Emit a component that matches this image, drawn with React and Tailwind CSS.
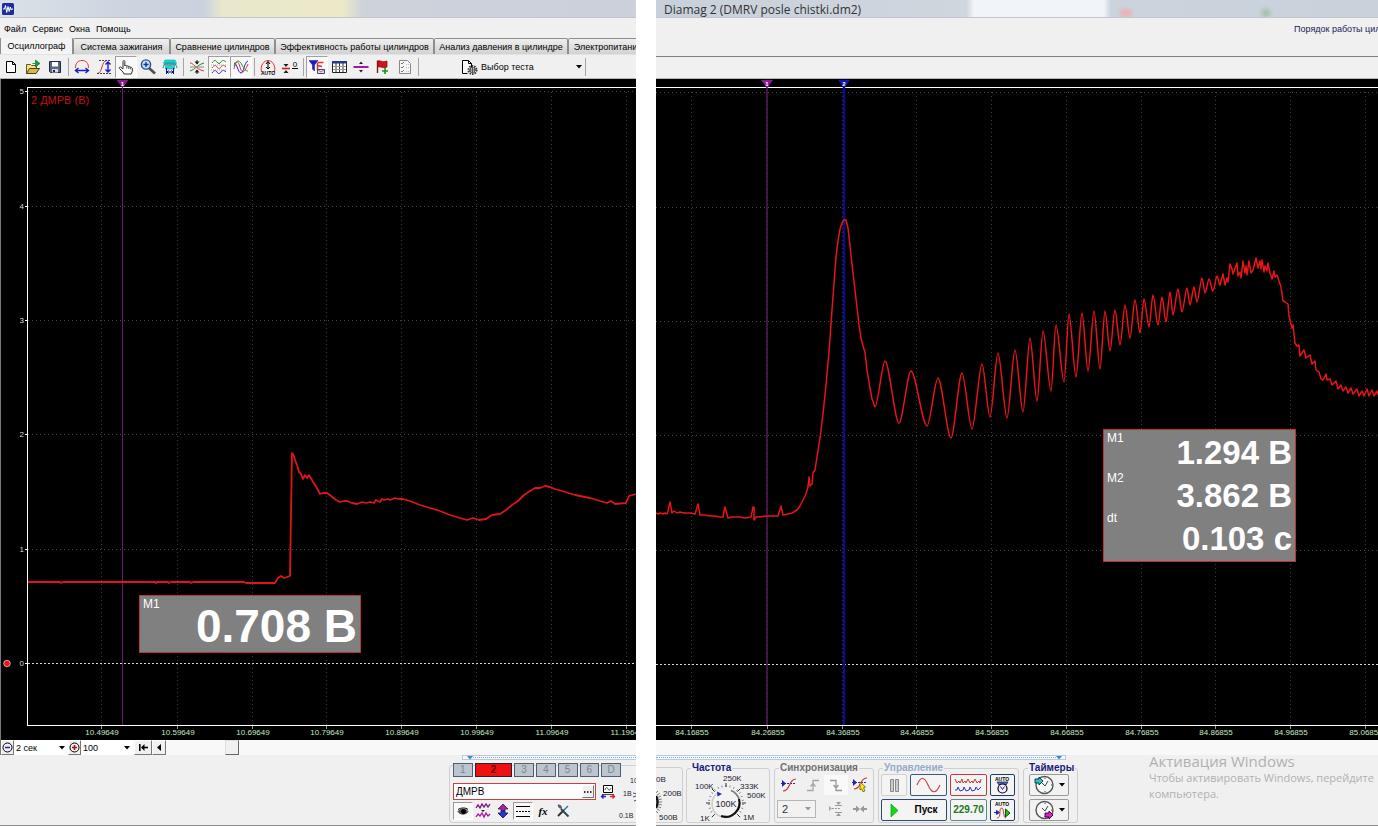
import React from "react";

/* ---------- shared data ---------- */

const TABS = [
  { label: "Осциллограф", cls: "w-[73px]", active: true },
  { label: "Система зажигания", cls: "w-[97px]" },
  { label: "Сравнение цилиндров", cls: "w-[105px]" },
  { label: "Эффективность работы цилиндров", cls: "w-[159px]" },
  { label: "Анализ давления в цилиндре", cls: "w-[134px]" },
  { label: "Электропитание", cls: "w-[80px]" },
];

const LEFT_TRACE =
  "28,582 60,582 61,583 63,582 155,582 156,583 157,582 168,582 169,583 171,582 190,582 191,583 193,582 244,582 246,583 275,583 278,578 281,576 284,578 287,577 290,576 292,453 294,456 295,460 297,465 299,472 301,474 303,479 305,475 307,478 309,475 312,480 315,485 318,490 320,494 323,493 327,493 331,496 336,500 340,502 344,501 347,501 352,503 357,504 362,502 366,503 370,502 374,503 376,500 380,502 382,499 384,500 388,499 390,500 395,498 399,499 403,499 410,501 420,505 430,508 440,511 450,515 460,518 467,520 473,518 479,520 486,519 492,515 500,514 506,510 512,505 518,501 524,495 530,491 535,488 540,488 545,486 550,487 555,489 562,491 575,495 590,498 600,501 607,503 611,501 615,504 626,503 629,496 636,494";

const RIGHT_START =
  "656,513 658,514 660,513 663,514 665,513 667,514 668,511 670,502 672,513 674,511 677,513 680,512 684,513 690,513 695,514 698,504 700,515 705,515 710,516 715,516 720,517 723,517 725,507 728,518 732,517 740,517 745,518 751,517 753,507 754,507 754,520 756,517 770,516 778,516 781,506 783,515 788,514 792,513 797,510 800,506 803,500 806,494 808,487 809,477 810,486 812,484 813,473 815,470 817,457 820,438 823,414 826,385 829,352 832,310 835,270 836,257 838,241 840,229 842,223 844,220 846,220 848,228 851,255 855,290 859,325 861,338 863,346 865,352 867,370 870,388 872,399";

/* turning points of the oscillating part */
const RIGHT_WAVES =
  "875,407 885,361 899,423 911,371 927,426 938,378 951,438 962,373 972,429 982,364 990,417 998,353 1007,418 1015,350 1023,412 1030,338 1037,401 1043,331 1051,391 1056,325 1064,382 1069,314 1076,377 1082,313 1088,371 1094,311 1100,369 1105,311 1110,351 1115,310 1120,345 1125,305 1130,338 1135,300 1140,333 1144,299 1149,327 1153,295 1158,325 1162,297 1166,322 1170,292 1173,315 1178,289 1182,312 1187,288 1190,305 1194,287 1197,302 1202,278 1205,293 1209,279 1213,291 1217,276 1220,285";

const RIGHT_END =
  "1223,274 1225,285 1227,278 1228,282 1230,264 1232,269 1233,274 1237,263 1238,276 1240,272 1241,278 1243,261 1245,273 1246,266 1247,275 1249,261 1251,273 1253,270 1256,258 1258,268 1260,261 1261,269 1262,260 1264,272 1265,266 1267,271 1268,263 1270,273 1272,279 1274,271 1275,277 1277,275 1279,281 1281,287 1283,301 1285,302 1288,304 1289,316 1291,324 1292,328 1293,325 1295,343 1297,346 1299,345 1300,356 1304,350 1306,358 1310,355 1312,364 1315,361 1316,370 1319,372 1321,379 1323,380 1326,374 1327,380 1330,379 1332,385 1336,381 1338,389 1341,385 1343,391 1346,387 1348,393 1351,388 1353,394 1357,389 1359,396 1362,391 1364,396 1367,389 1369,396 1372,390 1374,396 1377,391 1378,395";

function curvedPath(straight, waves, tail) {
  const toPoints = (s) => s.split(" ").map((p) => p.split(",").map(Number));
  let [px, py] = toPoints(straight).at(-1);
  let d = "M" + straight.split(" ").join("L");
  for (const [x, y] of toPoints(waves)) {
    const k = (x - px) * 0.3;
    d += `C${px + k},${py} ${x - k},${y} ${x},${y}`;
    px = x;
    py = y;
  }
  return d + "L" + tail.split(" ").join("L");
}

/* ---------- small building blocks ---------- */

function Svg({ w = 16, h = 16, children, className = "" }) {
  return (
    <svg
      width={w}
      height={h}
      viewBox={`0 0 ${w} ${h}`}
      fill="none"
      stroke="#000"
      className={"shrink-0 " + className}
      aria-hidden="true"
    >
      {children}
    </svg>
  );
}

const Sep = () => <span className="mx-[2px] h-[18px] w-px bg-[#a6a6a6]" />;

function ToolButton({ label, pressed, children }) {
  return (
    <button
      aria-label={label}
      className={
        "flex h-[22px] w-[22px] items-center justify-center " +
        (pressed ? "border border-[#a0a0a0] border-r-white border-b-white bg-[#f9f9f9]" : "")
      }
    >
      {children}
    </button>
  );
}

const Caret = ({ className = "" }) => (
  <svg width="6" height="4" viewBox="0 0 6 4" className={"shrink-0 " + className} aria-hidden="true">
    <path d="M0 0h6L3 3.5z" fill="currentColor" />
  </svg>
);

function Marker({ x, n, color, head, line }) {
  return (
    <g>
      <path d={`M${x} 84V725`} stroke={color} strokeWidth={line} />
      <path d={`M${x - 6} 80h12l-6 8z`} fill={head} />
      <text x={x} y="86" fontSize="6" fontWeight="bold" fill="#fff" textAnchor="middle">
        {n}
      </text>
    </g>
  );
}

function Grid({ x0, x1, xs, ys, zero }) {
  return (
    <g shapeRendering="crispEdges">
      {xs.map((x) => (
        <path key={x} d={`M${x + 0.5} 92V725`} stroke="#3c3c3c" strokeDasharray="1 3" />
      ))}
      {ys.map((y) => (
        <path key={y} d={`M${x0} ${y + 0.5}H${x1}`} stroke="#474747" strokeDasharray="1 3" />
      ))}
      <path d={`M${x0} ${zero + 0.5}H${x1}`} stroke="#d8d8d8" strokeDasharray="2 2" />
      <path d={`M${x0} 87.5H${x1}M${x0} 725.5H${x1}`} stroke="#fff" />
      {xs.map((x) => (
        <path key={x} d={`M${x + 0.5} 726v3`} stroke="#9a9a9a" />
      ))}
    </g>
  );
}

function XLabels({ xs, labels }) {
  return (
    <g fill="#c4e8c4" fontSize="8" textAnchor="middle">
      {xs.map((x, i) => (
        <text key={x} x={x + 1} y="735">
          {labels[i]}
        </text>
      ))}
    </g>
  );
}

/* ---------- toolbar ---------- */

function Toolbar() {
  return (
    <div className="flex h-6 items-center overflow-hidden border-b border-[#b5b5b5] bg-[#f0f0f0]">
      <ToolButton label="Новый">
        <Svg>
          <path d="M3.5 2.5h6l3 3v8h-9z" fill="#fff" />
          <path d="M9.500 2.500v3h3" />
        </Svg>
      </ToolButton>
      <ToolButton label="Открыть">
        <Svg>
          <path d="M1.500 14.500v-9h4l1 1h5v3" fill="#f4e28a" stroke="#6b5a10" />
          <path d="M1.500 14.500l3-5h10l-3.500 5z" fill="#d9b84a" stroke="#4d420d" />
          <path d="M10.500 1l4.500 3.500-4.500 3.500z" fill="#1d9a3c" stroke="#0c6b23" strokeWidth=".6" />
          <path d="M7.500 4.500h3" stroke="#1d9a3c" />
        </Svg>
      </ToolButton>
      <ToolButton label="Сохранить">
        <Svg>
          <path d="M2.500 2.500h11v11h-10l-1-1z" fill="#5b6784" stroke="#1f2740" />
          <path d="M5 3h6v4.500H5z" fill="#fff" stroke="none" />
          <path d="M5 10h6v3.500H5z" fill="#d7dbe4" stroke="none" />
          <path d="M6 11h2v2H6z" fill="#1f2740" stroke="none" />
        </Svg>
      </ToolButton>
      <Sep />
      <ToolButton label="Растянуть по времени">
        <Svg>
          <path d="M1.500 9C1.500 4 4 1.500 8 1.500S14.500 4 14.500 9" stroke="#d33" />
          <path d="M1 11.500h14M4.500 9l-3 2.500 3 2.500M11.500 9l3 2.500-3 2.500" stroke="#1a1ad0" strokeWidth="1.400" />
        </Svg>
      </ToolButton>
      <ToolButton label="Растянуть по амплитуде">
        <Svg>
          <path d="M1 14.500c6 0 4-13 10-13" stroke="#d33" />
          <path d="M3 1.500h12M1 14.500h14" stroke="#444" strokeDasharray="2 1" />
          <path d="M12 3v10M9.500 5.500L12 3l2.500 2.500M9.500 10.500L12 13l2.500-2.500" stroke="#1a1ad0" strokeWidth="1.400" />
        </Svg>
      </ToolButton>
      <ToolButton label="Рука" pressed>
        <Svg>
          <path
            d="M6 15l-1-2-3.500-3.500c-.8-1 .4-2 1.500-1.200L5 10V2.500c0-1.300 1.800-1.300 1.800 0V7c.4-.9 2-.8 2 .3.500-.7 2-.6 2 .5.600-.5 1.900-.3 1.900.8.800-.3 1.700.1 1.700 1v2.400l-1.200 3z"
            fill="#fff"
            stroke="#333"
          />
          <path d="M8.800 7.500v2M10.800 8v2M12.700 8.600v1.800" stroke="#444" />
        </Svg>
      </ToolButton>
      <ToolButton label="Лупа">
        <Svg>
          <path d="M9 9l6 5.500" stroke="#4d4d55" strokeWidth="2.600" />
          <circle cx="6" cy="5.500" r="4.600" fill="#bfe3ff" stroke="#2a4b86" strokeWidth="1.400" />
          <path d="M3.500 5.500h5M6 3v5" stroke="#173a8a" strokeWidth="1.400" />
        </Svg>
      </ToolButton>
      <ToolButton label="Участок">
        <Svg>
          <path d="M3 1h10l1.500 3-2 3v3h-9V7l-2-3z" fill="#19d6d6" stroke="#0aa" strokeWidth=".6" />
          <path d="M1 9c1-5 3-5 4-5h6c2 0 3 1 4 5" stroke="#0a8a8a" />
          <path d="M3 6c2-2 3 1 5 0s3-1 5 0" stroke="#d55" />
          <path d="M4.500 9v6M11.500 9v6M5 13h6" stroke="#116" />
          <path d="M6.500 11.500L5 13l1.500 1.500M9.500 11.500L11 13l-1.500 1.500" stroke="#118" />
        </Svg>
      </ToolButton>
      <Sep />
      <ToolButton label="Совместить">
        <Svg>
          <path d="M1 4c4 0 5 6 14 8" stroke="#d33" />
          <path d="M1 12c5-1 8-7 14-8" stroke="#2a8a2a" />
          <path d="M1 8h14" stroke="#888" />
          <path d="M8 1v4M8 15v-4" stroke="#222" />
          <path d="M5.500 2.500h5L8 5.500zM5.500 13.500h5L8 10.500z" fill="#222" stroke="none" />
        </Svg>
      </ToolButton>
      <ToolButton label="Разнести" pressed>
        <Svg>
          <path d="M1 4c2-3 4-3 5-1s3 2 4 0 3-2 5 0" stroke="#2a8a2a" />
          <path d="M1 9c2-3 4-3 5-1s3 2 4 0 3-2 5 0" stroke="#d33" />
          <path d="M1 14c2-3 4-3 5-1s3 2 4 0 3-2 5 0" stroke="#22c" />
          <path d="M0 6h16M0 11h16" stroke="#aaa" strokeDasharray="1 1" />
        </Svg>
      </ToolButton>
      <ToolButton label="Наложить" pressed>
        <Svg>
          <path d="M1 10C3 1 5 1 7 8s4 7 8-3" stroke="#d33" />
          <path d="M1 4c3 0 4 10 7 10s3-11 7-12" stroke="#22c" />
          <path d="M1 7c3-8 6-5 8-1s4 6 6 6" stroke="#2a8a2a" />
        </Svg>
      </ToolButton>
      <Sep />
      <ToolButton label="Авто амплитуда">
        <Svg>
          <path d="M1.500 13C0 6 4 1.500 8 1.500S16 6 14.500 13" stroke="#d33" />
          <path d="M8 2.500v7M6 5l2-2.500L10 5M6 8l2 2 2-2" />
          <text x="8" y="16" fontSize="5" fontWeight="bold" textAnchor="middle" fill="#000" stroke="none">
            AUTO
          </text>
        </Svg>
      </ToolButton>
      <ToolButton label="Установить ноль">
        <Svg>
          <path d="M0 9.500h8" stroke="#c22" strokeWidth="1.600" />
          <path d="M1.500 5h5L4 8zM1.500 14h5L4 11z" fill="#222" stroke="none" />
          <path d="M10 9.500h6" />
          <text x="13" y="8" fontSize="8" textAnchor="middle" fill="#000" stroke="none">
            0
          </text>
        </Svg>
      </ToolButton>
      <Sep />
      <ToolButton label="Фильтр" pressed>
        <Svg>
          <path d="M0 1.500h9L5.500 6v6L3.500 10V6z" fill="#1a1ad0" stroke="#118" strokeWidth=".5" />
          <path d="M8.500 3.500h6M8 6.500l5 1M8.500 4v7" stroke="#d33" strokeWidth="1.600" />
          <path d="M8.500 10.500h7v4h-7z" fill="#dfe6ff" stroke="#446" />
          <path d="M9 11l3 2 3-2" stroke="#c44" strokeWidth=".8" />
        </Svg>
      </ToolButton>
      <ToolButton label="Таблица">
        <Svg>
          <path d="M1.500 2.500h14v11h-14z" fill="#fff" stroke="#222" />
          <path d="M1 2h15v2.500H1z" fill="#223a8a" stroke="none" />
          <path d="M5 4v9M8.500 4v9M12 4v9" stroke="#333" />
          <path d="M2 7.500h13M2 10.500h13" stroke="#999" />
        </Svg>
      </ToolButton>
      <ToolButton label="Линейка">
        <Svg>
          <path d="M.5 8h15" stroke="#909" strokeWidth="1.800" />
          <path d="M6 5h4L8 2.500zM6 11h4L8 13.500z" fill="#222" stroke="none" />
        </Svg>
      </ToolButton>
      <ToolButton label="Флаг">
        <Svg>
          <path d="M2.500 1.500V14" stroke="#722" strokeWidth="1.400" />
          <path d="M3 2c3-1 4 2 9 0v6c-4 2-6-1-9 0z" fill="#d4121c" stroke="#800" strokeWidth=".7" />
          <path d="M7 12h6M10 9v6" stroke="#169a16" strokeWidth="1.600" />
        </Svg>
      </ToolButton>
      <ToolButton label="Отчёт">
        <Svg>
          <path d="M2.500 1.500h8l3 3v10h-11z" fill="#f6f6f6" stroke="#888" />
          <path d="M4 4l1 1 2-2M4 8l1 1 2-2M4 12l1 1 2-2" stroke="#777" />
          <path d="M9 5.500h3M9 8.500h3M9 12.500h3" stroke="#bbb" strokeDasharray="1 1" />
        </Svg>
      </ToolButton>
      <Sep />
      <button className="ml-10 flex h-[22px] w-[121px] shrink-0 items-center gap-[3px]">
        <Svg w={17}>
          <path d="M1.500 14.500v-13h6l3 3v4" fill="#fff" />
          <path d="M7.500 1.500v3h3M1.500 14.500h5" />
          <circle cx="11.500" cy="11" r="4" stroke="#333" strokeWidth="2" strokeDasharray="1.500 1" />
          <circle cx="11.500" cy="11" r="2.500" stroke="#444" />
          <path d="M8 11h7M11.500 7.500v7" stroke="#555" />
        </Svg>
        <span className="flex-1 text-left">Выбор теста</span>
        <Caret />
      </button>
      <span className="ml-[3px] h-[18px] w-px bg-[#a6a6a6]" />
    </div>
  );
}

/* ---------- oscilloscope screens ---------- */

const LX = [101, 177, 252, 326, 401, 476, 551, 626];
const RX = [691, 767, 842, 916, 991, 1066, 1141, 1215, 1290, 1365];

function LeftScope() {
  return (
    <div className="relative bg-black">
      <svg viewBox="0 79 636 661" className="block w-full" role="img" aria-label="ДМРВ, канал 2">
        <path d="M.5 79V740" stroke="#777" />
        <Grid x0={28} x1={636} xs={LX} ys={[91, 206, 320, 434, 549]} zero={663} />
        <path d="M27.500 87V726" stroke="#fff" />
        <g fill="#ddd" fontSize="8" textAnchor="end">
          {[5, 4, 3, 2, 1, 0].map((n, i) => (
            <text key={n} x="24" y={[94, 209, 323, 437, 552, 666][i]}>
              {n}
            </text>
          ))}
        </g>
        <path d="M25 91.500h3M25 206.500h3M25 320.500h3M25 434.500h3M25 549.500h3M25 663.500h3" stroke="#fff" />
        <circle cx="7" cy="663.500" r="3.300" fill="#e8141c" stroke="#fff" strokeWidth=".6" />
        <text x="31" y="104" fontSize="11" fill="#c01414">
          2 ДМРВ (В)
        </text>
        <Marker x={122.5} n="1" color="#6a1a6e" head="#8a1a8e" line={1} />
        <polyline points={LEFT_TRACE} fill="none" stroke="#e0141a" strokeWidth="1.800" strokeLinejoin="round" />
        <XLabels
          xs={LX}
          labels={["10.49649", "10.59649", "10.69649", "10.79649", "10.89649", "10.99649", "11.09649", "11.19649"]}
        />
      </svg>
      <div className="absolute top-[516px] left-[139px] flex h-[58px] w-[222px] justify-between border border-[#c43030] bg-[#808080] px-[3px] text-white">
        <span className="text-[12px] leading-4">М1</span>
        <span className="text-[46px] leading-[60px] font-bold whitespace-nowrap">0.708 В</span>
      </div>
    </div>
  );
}

const READINGS = [
  ["М1", "1.294 В"],
  ["М2", "3.862 В"],
  ["dt", "0.103 с"],
];

function RightScope() {
  return (
    <div className="relative bg-black">
      <svg viewBox="656 79 722 661" className="block w-full" role="img" aria-label="ДМРВ после чистки">
        <Grid x0={656} x1={1378} xs={RX} ys={[92, 207, 321, 435, 550]} zero={664} />
        <Marker x={767} n="1" color="#5a145e" head="#8a1a8e" line={1.500} />
        <Marker x={844} n="2" color="#0c0c86" head="#1414b4" line={2.500} />
        <path
          d={curvedPath(RIGHT_START, RIGHT_WAVES, RIGHT_END)}
          fill="none"
          stroke="#e8141a"
          strokeWidth="1.500"
          strokeLinejoin="round"
        />
        <XLabels
          xs={RX}
          labels={[
            "84.16855",
            "84.26855",
            "84.36855",
            "84.46855",
            "84.56855",
            "84.66855",
            "84.76855",
            "84.86855",
            "84.96855",
            "85.06855",
          ]}
        />
      </svg>
      <div className="absolute top-[350px] left-[447px] flex h-[133px] w-[193px] justify-between border border-[#c43030] bg-[#808080] px-[3px] text-white">
        <div className="flex flex-col">
          {READINGS.map(([k]) => (
            <span key={k} className="h-10 text-[12px] leading-4">
              {k}
            </span>
          ))}
        </div>
        <div className="flex flex-col items-end">
          {READINGS.map(([k, v]) => (
            <span key={k} className="h-[43px] text-[33px] leading-[45px] font-bold whitespace-nowrap">
              {v}
            </span>
          ))}
        </div>
      </div>
    </div>
  );
}

/* ---------- time base row ---------- */

function SmallSelect({ label, value, className }) {
  return (
    <span className={"relative flex h-full items-center " + className}>
      <select aria-label={label} className="h-full w-full appearance-none bg-white pl-[2px] text-[9px] leading-3 outline-none">
        <option>{value}</option>
      </select>
      <Caret className="pointer-events-none absolute right-[3px]" />
    </span>
  );
}

function TimeRow() {
  const box = "flex h-full items-center justify-center border border-white border-r-[#777] border-b-[#777] bg-[#f0f0f0]";
  return (
    <div className="flex h-[15px] items-center border-l border-[#777] bg-[#f8f8f8]">
      <button aria-label="Сжать" className={box + " w-[13px]"}>
        <Svg w={11} h={11}>
          <circle cx="5.500" cy="5.500" r="4.500" />
          <path d="M3 5.500h5" stroke="#22a" strokeWidth="1.500" />
        </Svg>
      </button>
      <SmallSelect label="Развёртка" value="2 сек" className="w-[54px]" />
      <button aria-label="Растянуть" className={box + " w-[13px]"}>
        <Svg w={11} h={11}>
          <circle cx="5.500" cy="5.500" r="4.500" />
          <path d="M3 5.500h5M5.500 3v5" stroke="#a11" strokeWidth="1.500" />
        </Svg>
      </button>
      <SmallSelect label="Масштаб" value="100" className="w-[52px]" />
      <button aria-label="В начало" className={box + " ml-px w-[18px]"}>
        <Svg w={9} h={7}>
          <path d="M.8 0v7" strokeWidth="1.600" />
          <path d="M5.500 0v7L2 3.500z" fill="#000" stroke="none" />
          <path d="M5 3.500h4" strokeWidth="1.600" />
        </Svg>
      </button>
      <button aria-label="Назад" className={box + " w-[14px]"}>
        <Svg w={4} h={7}>
          <path d="M4 0v7L0 3.500z" fill="#000" stroke="none" />
        </Svg>
      </button>
      <input
        type="range"
        aria-label="Прокрутка"
        defaultValue="13"
        className="m-0 h-full min-w-0 flex-1 appearance-none bg-transparent [&::-webkit-slider-thumb]:h-[15px] [&::-webkit-slider-thumb]:w-[14px] [&::-webkit-slider-thumb]:appearance-none [&::-webkit-slider-thumb]:border [&::-webkit-slider-thumb]:border-[#ddd] [&::-webkit-slider-thumb]:border-r-[#666] [&::-webkit-slider-thumb]:border-b-[#666] [&::-webkit-slider-thumb]:bg-[#f0f0f0]"
      />
    </div>
  );
}

/* ---------- left bottom panel ---------- */

function ChannelPanel() {
  return (
    <div className="flex h-[71px] justify-end overflow-hidden border-b border-[#8c8c8c] bg-[#f0f0f0]">
      <div className="flex w-[187px] flex-col">
        <div className="ml-[13px] flex h-[5px] items-center border border-[#b9c9d9] border-r-0 bg-[#f6faff]">
          <span className="ml-1 text-[#3a8ac8]">
            <Caret />
          </span>
          <span className="flex-1 border-t border-dotted border-[#7aa6d0]" />
        </div>
        <div className="mt-[5px] flex h-[58px] rounded-l border border-r-0 border-[#d0d0d0] pl-[3px]">
          <div className="-mt-[3px] w-[168px] shrink-0">
            <div className="flex h-[14px] gap-[2px]">
              {["1", "2", "3", "4", "5", "6", "D"].map((n) => (
                <button
                  key={n}
                  className={
                    "h-full border text-[10px] leading-3 " +
                    (n === "2"
                      ? "w-[38px] border-[#223] bg-[#f01010] font-bold text-[#600]"
                      : "w-5 border-[#4d5f73] bg-[#bcc4cd] text-[#7b8794]")
                  }
                >
                  {n}
                </button>
              ))}
            </div>
            <div className="mt-[6px] flex h-[17px] items-center gap-1">
              <div className="flex h-full w-[143px] border border-[#c84040] bg-white">
                <input aria-label="Имя канала" defaultValue="ДМРВ" className="min-w-0 flex-1 bg-white pl-[2px] text-[10px] outline-none" />
                <button aria-label="Выбрать" className="m-px flex w-3 items-center justify-center border border-white border-r-[#777] border-b-[#777] bg-[#f0f0f0]">
                  <Svg w={8} h={2}>
                    <path d="M0 1h8" strokeWidth="1.500" strokeDasharray="1.500 1.500" />
                  </Svg>
                </button>
              </div>
              <button aria-label="Переключить датчик">
                <Svg h={15}>
                  <path d="M3.500 1.500h9v7h-9z" fill="#fff" />
                  <path d="M5 6c1-3 2-3 3-1s2 1 3-1M2 10.500h12" stroke="#444" />
                  <path d="M6 12.500H2M3.500 10.500l-2 2 2 2" stroke="#22c" strokeWidth="1.300" />
                  <path d="M10 12.500h4M12.500 10.500l2 2-2 2" stroke="#d22" strokeWidth="1.300" />
                </Svg>
              </button>
            </div>
            <div className="mt-[1px] flex h-5 items-center">
              <ChannelTool label="Показать" pressed>
                <path d="M3 8.500c2-3 8-3 10 0-2 3.500-8 3.500-10 0z" fill="#555" stroke="#444" />
                <circle cx="8.500" cy="8.500" r="2" fill="#000" />
                <path d="M3 6.500c3-2 8-2 10 0" />
              </ChannelTool>
              <ChannelTool label="Сигнал">
                <path d="M1 5l2-3 2 3 2-4 2 3 2-3 2 3 2-3" stroke="#717" strokeWidth="1.300" />
                <path d="M1 14l2-3 2 2 2-3 2 4 2-4 2 3 2-2" stroke="#a19" strokeWidth="1.300" />
                <path d="M6 7h4L8 9z" fill="#222" stroke="none" />
              </ChannelTool>
              <ChannelTool label="Сдвиг">
                <path d="M8 1l5 5h-3v2H6V6H3z" fill="#a1269c" stroke="#515" strokeWidth=".8" />
                <path d="M8 15l5-5h-3V8H6v2H3z" fill="#2038d8" stroke="#115" strokeWidth=".8" />
              </ChannelTool>
              <ChannelTool label="Уровни" pressed>
                <path d="M1 3.500h14M1 13.500h14" />
                <path d="M1 8.500h14" strokeDasharray="2 1" />
              </ChannelTool>
              <button aria-label="Функция" className="h-[18px] w-5 text-[11px] leading-4 font-bold italic font-['Liberation_Serif',serif]">
                fx
              </button>
              <ChannelTool label="Настройки">
                <path d="M3 13l6-6" stroke="#333" strokeWidth="2" />
                <path d="M13.500 13.500L6 6" stroke="#345" strokeWidth="2" />
                <path d="M3 2l1 2.500 2.500 1L6 3 4 2z" fill="#667" stroke="#556" />
                <path d="M9 7l4-4" stroke="#27a" strokeWidth="1.500" />
              </ChannelTool>
            </div>
          </div>
          <svg width="14" height="58" viewBox="0 0 14 58" className="w-[14px] shrink-0 overflow-visible" aria-hidden="true">
            <g fontSize="7" fill="#223">
              <text x="9" y="17">10B</text>
              <text x="2" y="30">1B</text>
              <text x="-2" y="52">0.1B</text>
            </g>
            <path d="M12 27l4 1M12 31l3-1M13 35l3-1" stroke="#555" />
          </svg>
        </div>
      </div>
    </div>
  );
}

function ChannelTool({ label, pressed, children }) {
  return (
    <button
      aria-label={label}
      className={
        "flex h-[18px] w-5 items-center justify-center " +
        (pressed ? "border border-[#999] border-r-white border-b-white bg-[#f9f9f9]" : "")
      }
    >
      <Svg>{children}</Svg>
    </button>
  );
}

/* ---------- right bottom panel ---------- */

function Group({ title, tone, className, children }) {
  return (
    <fieldset className={"h-[60px] shrink-0 rounded-[3px] border border-[#cfcfcf] px-[2px] pb-0 " + className}>
      <legend className={"ml-[2px] h-[10px] px-px text-[10px] leading-[10px] font-bold whitespace-nowrap " + tone}>{title}</legend>
      {children}
    </fieldset>
  );
}

function ticks(cx, cy, r0, r1, from, to, n) {
  let d = "";
  for (let i = 0; i < n; i++) {
    const a = ((from + ((to - from) * i) / (n - 1)) * Math.PI) / 180;
    d += `M${cx + r0 * Math.cos(a)} ${cy + r0 * Math.sin(a)}L${cx + r1 * Math.cos(a)} ${cy + r1 * Math.sin(a)}`;
  }
  return d;
}

function FrequencyKnob() {
  return (
    <svg width="78" height="50" viewBox="689 773 78 50" className="block" role="img" aria-label="Частота 100K">
      <path d={ticks(726, 803, 16, 18, 135, 405, 21)} stroke="#888" />
      <path d={ticks(726, 803, 16, 20, 135, 405, 7)} stroke="#333" />
      <circle cx="726" cy="803" r="13" fill="#f3f3f3" />
      <path d="M717 793.500A13.500 13.500 0 1 0 739 803" fill="none" stroke="#ccc" strokeWidth="1.500" />
      <path d="M739 799A14 14 0 0 1 721 816" fill="none" stroke="#111" strokeWidth="2.200" />
      <path d="M731 790.500A14 14 0 0 1 739 799" fill="none" stroke="#777" strokeWidth="1.600" />
      <path d="M717 791.500l5 2.500-4.500 2.500z" fill="#1428b0" />
      <g fill="#223" fontSize="8">
        <text x="695" y="789">100K</text>
        <text x="723" y="781">250K</text>
        <text x="740" y="789">333K</text>
        <text x="747" y="798">500K</text>
        <text x="700" y="821">1K</text>
        <text x="743" y="820">1M</text>
        <text x="726" y="807" fontSize="9" textAnchor="middle">100K</text>
      </g>
    </svg>
  );
}

function SyncGroup() {
  const b = "flex h-5 w-6 items-center justify-center";
  return (
    <div className="grid h-[48px] grid-cols-4 grid-rows-2 items-center">
      <button aria-label="Уровень" className={b}>
        <Svg>
          <path d="M0 6.500h15" stroke="#22c" strokeDasharray="2 1" />
          <path d="M2 14c8 0 5-12 13-12" stroke="#c33" strokeWidth="1.200" />
          <path d="M1 3v7l4-3.500z" fill="#22a" stroke="none" />
        </Svg>
      </button>
      <button aria-label="По фронту" className={b}>
        <Svg>
          <path d="M2 13.500h6V3.500h6M5.500 9.500L8 6.500l2.500 3" stroke="#a5a5a5" strokeWidth="1.300" />
        </Svg>
      </button>
      <button aria-label="По спаду" className={b + " bg-[#f9f9f9]"}>
        <Svg>
          <path d="M2 3.500h6v10h6M5.500 8L8 11l2.500-3" stroke="#999" strokeWidth="1.300" />
        </Svg>
      </button>
      <button aria-label="Авто" className={b}>
        <Svg>
          <path d="M0 5.500h15" stroke="#22c" strokeDasharray="2 1" />
          <path d="M2 12c8 0 5-11 13-11" stroke="#c33" strokeWidth="1.200" />
          <path d="M1 2v7l4-3.500z" fill="#22a" stroke="none" />
          <path d="M8 5l5.500 5-2 .8 1.500 3-2 1-1.500-3L8 13z" fill="#ffe81a" stroke="#6a5a00" strokeWidth=".8" />
        </Svg>
      </button>
      <span className="relative col-span-2 mr-[8px] flex h-[18px] items-center text-[#999]">
        <select aria-label="Канал синхронизации" className="h-full w-full appearance-none border border-[#b5b5b5] bg-[#f2f2f2] pl-1 text-[11px] leading-4 text-[#333]">
          <option>2</option>
        </select>
        <Caret className="pointer-events-none absolute right-[5px]" />
      </span>
      <button aria-label="Разнести" className={b}>
        <Svg>
          <path d="M1 7.500h12" stroke="#999" strokeDasharray="2 1" />
          <path d="M1 5v5l3-2.500z" fill="#aaa" stroke="none" />
          <path d="M7 4.500h7M7 11.500h7" stroke="#999" />
          <path d="M8 1h5l-2.500 3zM8 15h5l-2.500-3z" fill="#999" stroke="none" />
        </Svg>
      </button>
      <button aria-label="Сблизить" className={b}>
        <Svg>
          <path d="M1 8h5M15 8h-5" stroke="#999" strokeWidth="1.800" />
          <path d="M4 4.500L8 8l-4 3.500zM12 4.500L8 8l4 3.500z" fill="#999" stroke="none" />
        </Svg>
      </button>
    </div>
  );
}

function ControlGroup() {
  const b = "flex h-full items-center justify-center rounded-[2px] border bg-[#f4f4f4] ";
  return (
    <div className="flex flex-col gap-[3px] pt-px">
      <div className="flex h-[22px] gap-[3px]">
        <button aria-label="Пауза" className={b + "w-[26px] border-[#d0d0d0]"}>
          <Svg w={9} h={13}>
            <path d="M.5.500h3v12h-3zM5.500.500h3v12h-3z" fill="#ccc" stroke="#888" />
          </Svg>
        </button>
        <button aria-label="Синус" className={b + "w-[37px] border-[#38587c]"}>
          <Svg w={25}>
            <path d="M1 8C5-1 8-1 12 8s8 9 12 0" stroke="#c44" strokeWidth="1.200" />
          </Svg>
        </button>
        <button aria-label="Запись" className={b + "w-[37px] border-[#c83a3a]"}>
          <Svg w={29}>
            <path d="M1 2l2 4 2-2 1 2 2-4 1 4 2-2 1 2 2-4 2 4 2-2 1 2 2-4 2 4 2-2 1 2 1-4" stroke="#c33" />
            <path d="M1 13h2l1-3 2 4 3-1 1-3 2 4 3-1 1-3 2 4 3-1 1-3 2 3 3-3" stroke="#33c" />
          </Svg>
        </button>
        <button aria-label="Авто таймер" className={b + "w-[25px] border-[#1f3c66]"}>
          <Svg w={17} h={20}>
            <text x="8" y="6" fontSize="5" fontWeight="bold" textAnchor="middle" fill="#000" stroke="none">AUTO</text>
            <path d="M3 7h11l-2 3H5z" fill="#4a70b8" stroke="#224" strokeWidth=".8" />
            <circle cx="8.500" cy="13.500" r="4.500" fill="#eef" strokeWidth="1.200" />
            <path d="M6.500 11.500l2 3 2-3" stroke="#22a" />
          </Svg>
        </button>
      </div>
      <div className="flex h-[22px] gap-[3px]">
        <button className={b + "w-[66px] gap-[15px] border-[#2c4a70] text-[10px] font-bold"}>
          <Svg w={9} h={13}>
            <path d="M1 0l7 6.500L1 13z" fill="#16d816" stroke="#0a9a0a" strokeWidth=".7" />
          </Svg>
          Пуск
        </button>
        <output className={b + "w-[37px] border-[#5a8a9a] text-[10px] font-bold text-[#1a7a22]"}>229.70</output>
        <button aria-label="Авто пуск" className={b + "w-[25px] border-[#1f3c66]"}>
          <Svg w={17} h={20}>
            <text x="8" y="6" fontSize="5" fontWeight="bold" textAnchor="middle" fill="#000" stroke="none">AUTO</text>
            <path d="M0 12.500h4M2.500 10.500v4l3-2z" fill="#22c" stroke="#22c" />
            <path d="M3 18c5 0 1-10 5-10 2 0 1 10 4 10" stroke="#c33" />
            <path d="M11.500 9l4.500 4-4.500 4z" fill="#16c816" stroke="#075a07" />
          </Svg>
        </button>
      </div>
    </div>
  );
}

function TimerButton({ label, color, outgoing }) {
  return (
    <button aria-label={label} className="flex h-[22px] w-10 items-center justify-center gap-[5px] rounded-[2px] border border-[#999] bg-[#f2f2f2]">
      <Svg w={20} h={20}>
        <circle cx="10.500" cy="10" r="8.500" fill="#f4f8f8" stroke="#555" strokeWidth="1.400" />
        <path d="M11 11l3-5M11 11L8 8M11 3v1M18 10h-1M11 17v-1" stroke="#444" />
        {outgoing ? (
          <path d="M11 13h4v-2l4 4-4 4v-2h-4z" fill={color} stroke="#303" strokeWidth=".9" />
        ) : (
          <path d="M1 4h4V2l4 4-4 4V8H1z" fill={color} stroke="#033" strokeWidth=".9" />
        )}
      </Svg>
      <Caret />
    </button>
  );
}

function ControlPanel() {
  return (
    <div className="flex h-[71px] flex-col overflow-hidden border-b border-[#8c8c8c] bg-[#f0f0f0]">
      <div className="flex h-[5px] w-[410px] items-center border border-l-0 border-[#b9c9d9] bg-[#f6faff]">
        <span className="flex-1 border-t border-dotted border-[#7aa6d0]" />
        <span className="mr-[3px] text-[#3a8ac8]">
          <Caret />
        </span>
      </div>
      <div className="mt-[3px] flex items-end">
        <div className="flex h-[56px] w-[27px] shrink-0 rounded-r border border-l-0 border-[#cfcfcf]">
          <svg width="26" height="54" viewBox="656 768 26 54" role="img" aria-label="Диапазон">
            <path d={ticks(645, 802, 14, 17, -60, 60, 13)} stroke="#777" />
            <path d="M656 796a13 13 0 0 1 0 12" fill="none" stroke="#111" strokeWidth="2.500" />
            <g fill="#223" fontSize="8">
              <text x="656" y="782">0В</text>
              <text x="663" y="796">200В</text>
              <text x="659" y="820">500В</text>
            </g>
          </svg>
        </div>
        <Group title="Частота" tone="text-[#1a1a7a]" className="ml-[3px] w-[84px]">
          <FrequencyKnob />
        </Group>
        <Group title="Синхронизация" tone="text-[#707070]" className="ml-1 w-[100px]">
          <SyncGroup />
        </Group>
        <Group title="Управление" tone="text-[#93acc8]" className="ml-1 w-[141px]">
          <ControlGroup />
        </Group>
        <Group title="Таймеры" tone="text-[#1a1a7a]" className="ml-1 w-[55px]">
          <div className="flex flex-col gap-[3px] pt-px pl-[3px]">
            <TimerButton label="Таймер запуска" color="#2cc4c0" />
            <TimerButton label="Таймер остановки" color="#e020c8" outgoing />
          </div>
        </Group>
      </div>
    </div>
  );
}

/* ---------- windows ---------- */

function LeftWindow() {
  return (
    <section className="min-w-0 overflow-hidden">
      <header className="flex h-[18px] items-center border-b border-[#c3c7cd] bg-[linear-gradient(90deg,#dbe1e8_0%,#cdd6e0_18%,#c9d2dd_32%,#e9e8cd_35%,#ece9c8_54%,#cdd2db_57%,#cbd0da_100%)] pl-[2px]">
        <svg width="12" height="12" viewBox="0 0 12 12" aria-hidden="true">
          <rect width="12" height="12" rx="1.500" fill="#1c2d9c" />
          <path d="M1 6h1.500l1-3.500 1.200 7 1.300-6 1.200 5L8.300 4l.9 3 .6-1H11" fill="none" stroke="#fff" />
        </svg>
      </header>
      <nav className="flex h-5 items-center gap-[6px] bg-[#f0f0f0] pt-[2px] pl-1">
        {["Файл", "Сервис", "Окна", "Помощь"].map((m) => (
          <button key={m}>{m}</button>
        ))}
      </nav>
      <div role="tablist" className="flex h-[17px] items-end overflow-hidden border-b border-[#e2e2e2] bg-[#f0f0f0]">
        {TABS.map((t) => (
          <button
            key={t.label}
            role="tab"
            aria-selected={!!t.active}
            className={
              "shrink-0 rounded-t-[2px] border border-b-0 border-[#8e8e8e] whitespace-nowrap " +
              t.cls +
              (t.active ? " h-[17px] bg-[#f4f4f4]" : " h-4 bg-[linear-gradient(#efefef,#d2d2d2)]")
            }
          >
            {t.label}
          </button>
        ))}
      </div>
      <Toolbar />
      <LeftScope />
      <TimeRow />
      <ChannelPanel />
    </section>
  );
}

function RightWindow() {
  return (
    <section className="relative min-w-0 overflow-hidden">
      <header className="flex h-[18px] items-center justify-between overflow-hidden border-b border-[#c3c7cd] bg-[linear-gradient(90deg,#c8d0da_0%,#cfd6de_43%,#f1f5f9_44%,#f1f5f9_62%,#cbd4dd_63%,#c9d1db_100%)] pl-2">
        <h1 className="pt-[2px] text-[12px] leading-4 text-[#333] font-['Open_Sans',sans-serif]">Diamag 2 (DMRV posle chistki.dm2)</h1>
        <span className="mr-[108px] flex gap-[130px] pt-2 blur-[2px]">
          <span className="h-2 w-3 rounded-full bg-[#eeb0b0]" />
          <span className="h-2 w-2 rounded-full bg-[#9fc09f]" />
        </span>
      </header>
      <div className="flex h-[39px] justify-end overflow-hidden border-b border-[#808080] bg-[#f0f0f0] pt-1">
        <div className="w-[84px] whitespace-nowrap text-[#1a1a5a]">Порядок работы цилиндров</div>
      </div>
      <div className="h-[22px] border-b border-[#b5b5b5] bg-[#f0f0f0]" />
      <RightScope />
      <div className="h-[15px] bg-[#f8f8f8]" />
      <ControlPanel />
      <aside className="pointer-events-none absolute bottom-6 left-[493px] w-[260px] text-[#b0b0b0] font-['Open_Sans',sans-serif]">
        <p className="text-[15px] leading-[18px]">Активация Windows</p>
        <p className="text-[11px] leading-4 whitespace-nowrap">
          Чтобы активировать Windows, перейдите
          <br />
          компьютера.
        </p>
      </aside>
    </section>
  );
}

export default function App() {
  return (
    <main className="grid grid-cols-[636fr_20px_722fr] bg-white text-[9px] leading-[14px] text-black font-['Liberation_Sans',Arial,sans-serif]">
      <LeftWindow />
      <div />
      <RightWindow />
    </main>
  );
}
